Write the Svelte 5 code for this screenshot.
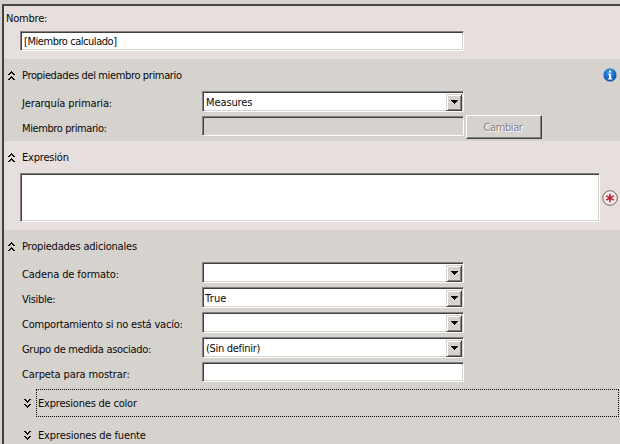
<script>
  const fields = [
    { label: 'Cadena de formato:', value: '', combo: true, spacing: -0.1 },
    { label: 'Visible:', value: 'True', combo: true, spacing: -0.3, valueSpacing: 0.2, inset: 2 },
    { label: 'Comportamiento si no está vacío:', value: '', combo: true, spacing: -0.2 },
    { label: 'Grupo de medida asociado:', value: '(Sin definir)', combo: true, spacing: -0.3, valueSpacing: -0.3, inset: 3 },
    { label: 'Carpeta para mostrar:', value: '', combo: false, spacing: -0.12 }
  ];
</script>

{#snippet chevron(down)}
  <svg class="chevron" class:down width="7" height="9" viewBox="0 0 7 9" shape-rendering="crispEdges">
    <path d="M3 0h1v1h1v1h1v1h1v1h-2v-1h-1v-1h-1v1h-1v1h-2v-1h1v-1h1v-1h1zM3 5h1v1h1v1h1v1h1v1h-2v-1h-1v-1h-1v1h-1v1h-2v-1h1v-1h1v-1h1z" />
  </svg>
{/snippet}

{#snippet combo(value, spacing = -0.1, inset = 3)}
  <div class="field combo">
    <span class="value" style:letter-spacing="{spacing}px" style:padding-left="{inset}px">{value}</span>
    <span class="arrow">
      <svg width="7" height="4" viewBox="0 0 7 4" shape-rendering="crispEdges"><path d="M0 0h7v1h-1v1h-1v1h-1v1h-1v-1h-1v-1h-1v-1h-1z" /></svg>
    </span>
  </div>
{/snippet}

<main>
  <div class="panel">
    <section class="name pink">
      <div class="title">Nombre:</div>
      <div class="field name-field"><span class="value">[Miembro calculado]</span></div>
    </section>

    <section class="parent">
      <header>
        {@render chevron(false)}<span class="long-title">Propiedades del miembro primario</span>
        <svg class="info" width="14" height="14" viewBox="0 0 14 14">
          <defs><radialGradient id="blue" cx="45%" cy="30%" r="70%"><stop offset="0" stop-color="#409ced" /><stop offset=".6" stop-color="#126bcc" /><stop offset="1" stop-color="#124c98" /></radialGradient></defs>
          <circle cx="7" cy="7" r="6.7" fill="url(#blue)" stroke="#aac3db" stroke-width=".4" />
          <path d="M6 2.5h2.2v2H6zM5 5.7h3.2v4.7h1.1v1.2H4.8v-1.2H6V6.8H5z" fill="#fff" />
        </svg>
      </header>
      <div class="row"><span class="label" style:letter-spacing="-0.13px">Jerarquía primaria:</span>{@render combo('Measures')}</div>
      <div class="row"><span class="label" style:letter-spacing="-0.4px">Miembro primario:</span><div class="field disabled"></div><button disabled>Cambiar</button></div>
    </section>

    <section class="expression pink">
      <header>{@render chevron(false)}<span>Expresión</span></header>
      <div class="expression-row">
        <div class="field area"></div>
        <svg class="required" width="16" height="16" viewBox="0 0 16 16">
          <circle cx="8" cy="8" r="7.3" fill="#f2e7e5" stroke="#756769" />
          <path d="M2.2 8a5.8 5.8 0 0 1 5.8-5.8" fill="none" stroke="#fff" />
          <path d="M8 3.7v8.6M4.2 5.8l7.6 4.4M11.8 5.8l-7.6 4.4" stroke="#b52236" stroke-width="1.5" />
        </svg>
      </div>
    </section>

    <section class="additional">
      <header>{@render chevron(false)}<span>Propiedades adicionales</span></header>
      {#each fields as field}
        <div class="row">
          <span class="label" style:letter-spacing="{field.spacing}px">{field.label}</span>
          {#if field.combo}{@render combo(field.value, field.valueSpacing, field.inset)}{:else}<div class="field plain"></div>{/if}
        </div>
      {/each}
      <div class="group color-group">{@render chevron(true)}<div class="focused"><span>Expresiones de color</span></div></div>
      <div class="group">{@render chevron(true)}<span class="group-title">Expresiones de fuente</span></div>
    </section>
  </div>
</main>

<style>
  :global(body) { margin: 0; overflow: hidden; }
  main, main * { box-sizing: border-box; }
  main {
    width: 620px; height: 444px; padding: 4px 0 0 2px; overflow: hidden;
    background: #d6d3ce; color: #080808;
    font: 11px/14px "DejaVu Sans Condensed", "DejaVu Sans", sans-serif;
    font-stretch: condensed; letter-spacing: -.2px; white-space: nowrap;
  }
  .panel { height: 440px; border: solid #424142; border-width: 2px 0 0 2px; border-top-color: #4a494a; }
  section { background: #d6d3ce; }
  .pink { background: #e7dfde; }
  .name { height: 53px; padding-top: 5px; }
  .title { height: 20px; padding-left: 2px; line-height: 15px; }
  .parent { height: 82px; }
  .expression { height: 89px; }
  header { display: flex; height: 32px; align-items: center; padding-left: 4px; }
  header > span { margin-left: 7px; padding-top: 2px; }
  .long-title { letter-spacing: -.36px; }
  .chevron { width: 7px; height: 9px; flex: none; fill: #080808; }
  .down { transform: scaleY(-1); }
  .info { margin-left: auto; margin-right: 3px; }
  .row { display: flex; height: 25px; align-items: flex-start; padding-left: 18px; }
  .label { width: 180px; line-height: 25px; flex: none; }
  .field {
    width: 262px; height: 21px; border: 1px solid; border-color: #848284 #fff #fff #848284;
    background: #fff; box-shadow: inset 1px 1px #424142, inset -1px -1px #d6d3ce;
  }
  .field .value { line-height: 19px; }
  .name-field { width: 444px; height: 20px; margin-left: 16px; }
  .name-field .value { padding-left: 3px; letter-spacing: -.45px; }
  .combo { display: flex; padding: 2px 1px 1px 0; justify-content: space-between; }
  .combo .value { line-height: 18px; }
  .arrow {
    display: flex; width: 16px; height: 17px; align-items: center; justify-content: center;
    background: #d6d3ce; border: 1px solid; border-color: #d6d3ce #424142 #424142 #d6d3ce;
    box-shadow: inset 1px 1px #fff, inset -1px -1px #848284;
  }
  .arrow svg { margin-bottom: 2px; }
  .disabled { height: 20px; background: #d6d3ce; }
  button {
    width: 76px; height: 24px; margin: -1px 0 0 2px; padding: 2px 2px 0 0;
    background: #d6d3ce; border: 1px solid; border-color: #fff #424142 #424142 #fff;
    box-shadow: inset -1px -1px #848284; border-radius: 0;
    font: inherit; letter-spacing: -.4px; color: #848284; text-shadow: 1px 1px #fff;
  }
  .expression-row { display: flex; align-items: center; padding-left: 16px; }
  .area { width: 580px; height: 49px; }
  .required { margin-left: 2px; }
  .additional { height: 214px; }
  .plain { height: 20px; }
  .group { display: flex; align-items: center; height: 28px; margin: 4px 0 0 20px; }
  .color-group { margin-top: 2px; }
  .focused { display: flex; align-items: center; width: 583px; height: 28px; margin-left: 5px; border: 1px dotted #080808; }
  .focused span { margin-left: 1px; padding-top: 2px; }
  .group-title { margin-left: 7px; padding-top: 1px; letter-spacing: -.13px; }
</style>
